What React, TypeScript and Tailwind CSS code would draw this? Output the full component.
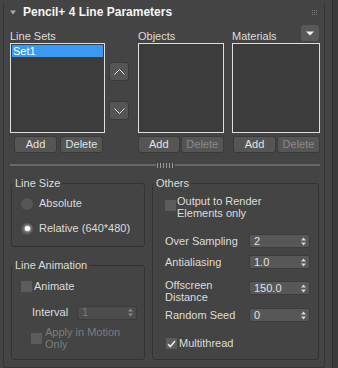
import React from "react";

function Btn({ label, disabled, w }: { label: string; disabled?: boolean; w: string }) {
  return (
    <div
      className={`${w} h-[17px] rounded-[3px] bg-[#555555] border border-[#3a3a3a] flex items-center justify-center ${
        disabled ? "text-[#8a8a8a]" : "text-[#e2e2e2]"
      }`}
    >
      {label}
    </div>
  );
}

function Spinner({ value, disabled, w }: { value: string; disabled?: boolean; w: string }) {
  return (
    <div
      className={`${w} h-[14px] rounded-[2px] border border-[#3c3c3c] flex items-center justify-between pl-[4px] pr-[3px] ${
        disabled ? "bg-[#4c4c4c] text-[#7a7a7a]" : "bg-[#575757] text-[#e2e2e2]"
      }`}
    >
      <span>{value}</span>
      <svg width="5" height="9" viewBox="0 0 5 9">
        <path d="M0 3.5L2.5 0.5L5 3.5Z" fill={disabled ? "#8a8a8a" : "#d6d6d6"} />
        <path d="M0 5.5L5 5.5L2.5 8.5Z" fill={disabled ? "#8a8a8a" : "#d6d6d6"} />
      </svg>
    </div>
  );
}

function Check({ checked }: { checked?: boolean }) {
  return (
    <div className="w-[11px] h-[11px] bg-[#5c5c5c] flex items-center justify-center shrink-0">
      {checked && (
        <svg width="9" height="8" viewBox="0 0 9 8">
          <path d="M1 4.2L3.3 6.6L8 1" stroke="#e8e8e8" strokeWidth="1.6" fill="none" />
        </svg>
      )}
    </div>
  );
}

function Radio({ on }: { on?: boolean }) {
  return (
    <div className="w-[12px] h-[12px] rounded-full bg-[#565656] flex items-center justify-center shrink-0">
      {on && <div className="w-[5px] h-[5px] rounded-full bg-white shadow-[0_0_2px_1px_rgba(255,255,255,0.55)]" />}
    </div>
  );
}

export default function App() {
  return (
    <div className="w-[338px] h-[368px] bg-[#444444] flex overflow-hidden text-[11px] leading-[13px] text-[#dcdcdc] font-['Liberation_Sans',Arial,sans-serif] select-none">
      {/* Rollout */}
      <div className="ml-[3px] mt-[3px] w-[322px] h-[365px] border-x border-b border-[#363636] rounded-b-[3px] flex flex-col pl-[6px] pr-[4px]">
        {/* Title */}
        <div className="h-[19px] flex items-center">
          <svg width="6" height="5" viewBox="0 0 6 5">
            <path d="M0 0.5H6L3 4.5Z" fill="#a8a8a8" />
          </svg>
          <span className="ml-[7px] text-[12px] font-bold text-[#f4f4f4]">Pencil+ 4 Line Parameters</span>
          <div className="ml-auto mr-[3px] grid grid-cols-3 gap-[1px]">
            {Array.from({ length: 9 }).map((_, i) => (
              <div key={i} className="w-[1px] h-[1px] bg-[#7c7c7c]" />
            ))}
          </div>
        </div>

        {/* Lists */}
        <div className="flex">
          <div className="w-[95px] flex flex-col">
            <div className="h-[21px] flex items-end">Line Sets</div>
            <div className="h-[90px] border border-[#dedede] bg-[#3c3c3c] p-[1px]">
              <div className="h-[12px] bg-[#3b99f2] text-white pl-[1px] leading-[12px]">Set1</div>
            </div>
            <div className="mt-[3px] pl-[4px] flex gap-[3px]">
              <Btn label="Add" w="w-[43px]" />
              <Btn label="Delete" w="w-[43px]" />
            </div>
          </div>

          <div className="ml-[4px] w-[20px] pt-[40px] flex flex-col gap-[20px]">
            <div className="h-[19px] rounded-[3px] bg-[#555555] border border-[#3a3a3a] flex items-center justify-center">
              <svg width="11" height="6" viewBox="0 0 11 6">
                <path d="M0.5 5.5L5.5 0.5L10.5 5.5" stroke="#e6e6e6" fill="none" />
              </svg>
            </div>
            <div className="h-[19px] rounded-[3px] bg-[#555555] border border-[#3a3a3a] flex items-center justify-center">
              <svg width="11" height="6" viewBox="0 0 11 6">
                <path d="M0.5 0.5L5.5 5.5L10.5 0.5" stroke="#e6e6e6" fill="none" />
              </svg>
            </div>
          </div>

          <div className="ml-[9px] w-[86px] flex flex-col">
            <div className="h-[21px] flex items-end">Objects</div>
            <div className="h-[90px] border border-[#dedede] bg-[#3c3c3c]" />
            <div className="mt-[3px] flex gap-[1px]">
              <Btn label="Add" w="w-[42px]" />
              <Btn label="Delete" disabled w="w-[44px]" />
            </div>
          </div>

          <div className="ml-[8px] w-[88px] flex flex-col">
            <div className="h-[21px] flex items-end justify-between">
              <span>Materials</span>
              <div className="mb-[2px] mr-[1px] w-[18px] h-[16px] rounded-[3px] bg-[#595959] flex items-center justify-center">
                <svg width="8" height="5" viewBox="0 0 8 5">
                  <path d="M0 0.5H8L4 4.5Z" fill="#f2f2f2" />
                </svg>
              </div>
            </div>
            <div className="h-[90px] border border-[#dedede] bg-[#3c3c3c]" />
            <div className="mt-[3px] ml-[1px] flex gap-[1px]">
              <Btn label="Add" w="w-[43px]" />
              <Btn label="Delete" disabled w="w-[43px]" />
            </div>
          </div>
        </div>

        {/* Splitter */}
        <div className="mt-[9px] h-[6px] flex items-center">
          <div className="flex-1 h-[2px] bg-[#686868]" />
          <div className="ml-[1px] h-[5px] flex gap-[2px]">
            {Array.from({ length: 6 }).map((_, i) => (
              <div key={i} className="w-[1px] bg-[#9a9a9a]" />
            ))}
          </div>
          <div className="ml-[2px] flex-1 h-[2px] bg-[#686868]" />
        </div>

        {/* Group boxes */}
        <div className="mt-[9px] pl-[1px] flex gap-[7px]">
          <div className="w-[134px] flex flex-col gap-[12px]">
            <fieldset className="h-[70px] border border-[#333333] rounded-[3px]">
              <legend className="ml-[1px] px-[2px]">Line Size</legend>
              <div className="pt-[7px] pl-[9px] flex flex-col gap-[12px]">
                <div className="h-[13px] flex items-center">
                  <Radio />
                  <span className="ml-[6px]">Absolute</span>
                </div>
                <div className="h-[13px] flex items-center">
                  <Radio on />
                  <span className="ml-[6px]">Relative (640*480)</span>
                </div>
              </div>
            </fieldset>

            <fieldset className="h-[101px] border border-[#333333] rounded-[3px]">
              <legend className="ml-[1px] px-[2px]">Line Animation</legend>
              <div className="pt-[8px] pl-[9px] flex flex-col">
                <div className="h-[13px] flex items-center">
                  <Check />
                  <span className="ml-[2px]">Animate</span>
                </div>
                <div className="mt-[13px] pl-[11px] h-[13px] flex items-center">
                  <span className="w-[45px]">Interval</span>
                  <Spinner value="1" disabled w="w-[60px]" />
                </div>
                <div className="mt-[7px] pl-[10px] flex items-center">
                  <Check />
                  <span className="ml-[3px] leading-[12px] text-[#7c7c7c]">
                    Apply in Motion
                    <br />
                    Only
                  </span>
                </div>
              </div>
            </fieldset>
          </div>

          <fieldset className="w-[167px] h-[183px] border border-[#333333] rounded-[3px]">
            <legend className="ml-[1px] px-[2px]">Others</legend>
            <div className="pt-[5px] pl-[12px] flex flex-col">
              <div className="flex items-start">
                <div className="mt-[5px]">
                  <Check />
                </div>
                <span className="ml-[1px] leading-[12px]">
                  Output to Render
                  <br />
                  Elements only
                </span>
              </div>
              <div className="mt-[15px] h-[14px] flex items-center">
                <span className="w-[84px]">Over Sampling</span>
                <Spinner value="2" w="w-[61px]" />
              </div>
              <div className="mt-[7px] h-[14px] flex items-center">
                <span className="w-[84px]">Antialiasing</span>
                <Spinner value="1.0" w="w-[61px]" />
              </div>
              <div className="mt-[10px] flex items-start">
                <span className="w-[84px] leading-[12px]">
                  Offscreen
                  <br />
                  Distance
                </span>
                <div className="mt-[2px]">
                  <Spinner value="150.0" w="w-[61px]" />
                </div>
              </div>
              <div className="mt-[5px] h-[14px] flex items-center">
                <span className="w-[84px]">Random Seed</span>
                <Spinner value="0" w="w-[61px]" />
              </div>
              <div className="mt-[15px] h-[13px] pl-[1px] flex items-center">
                <Check checked />
                <span className="ml-[2px]">Multithread</span>
              </div>
            </div>
          </fieldset>
        </div>
      </div>

      {/* Right edge strip */}
      <div className="w-[7px]" />
      <div className="w-[1px] bg-[#2e2e2e]" />
      <div className="flex-1 bg-[#3b3b3b]" />
    </div>
  );
}
